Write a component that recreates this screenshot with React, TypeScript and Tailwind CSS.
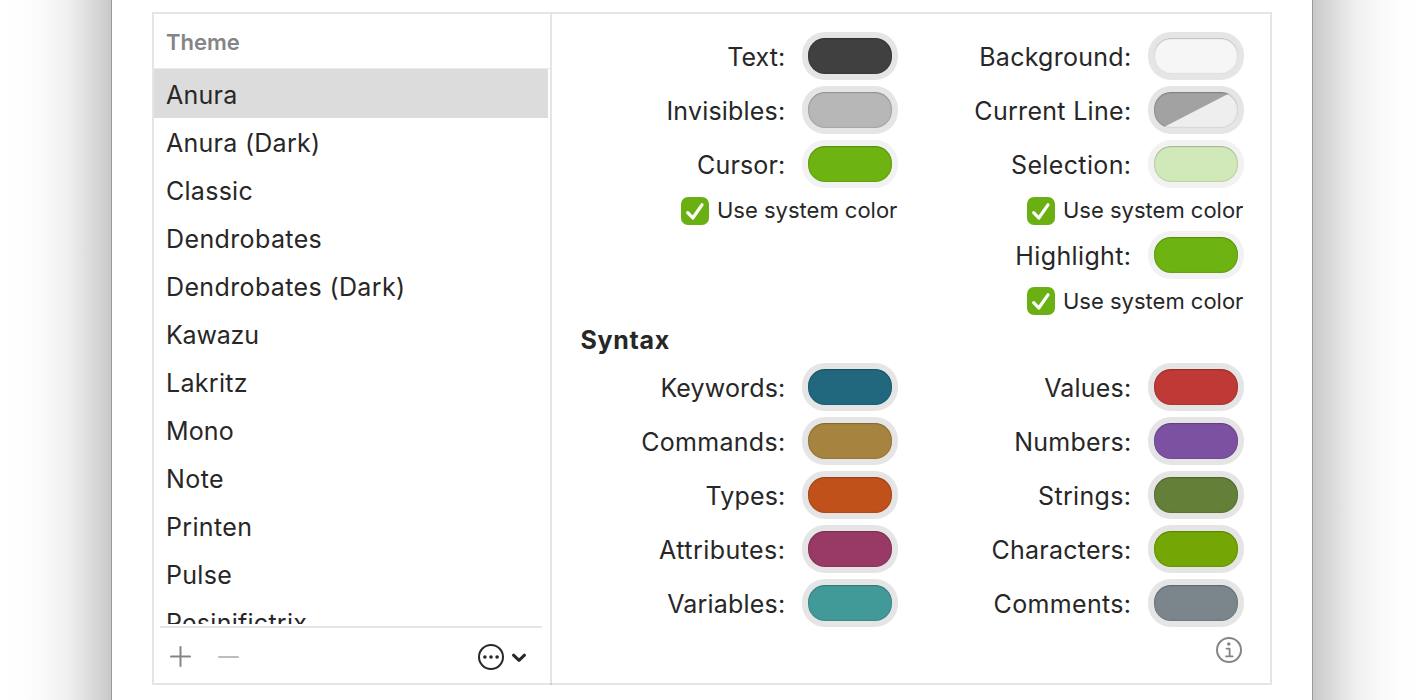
const themes = [
  { name: "Anura", tracking: "tracking-[0.25px]" },
  { name: "Anura (Dark)", tracking: "tracking-[0.27px]" },
  { name: "Classic", tracking: "tracking-[0.27px]" },
  { name: "Dendrobates", tracking: "tracking-[0.38px]" },
  { name: "Dendrobates (Dark)", tracking: "tracking-[0.37px]" },
  { name: "Kawazu", tracking: "tracking-[-0.2px]" },
  { name: "Lakritz", tracking: "tracking-[0.3px]" },
  { name: "Mono", tracking: "tracking-[0.1px]" },
  { name: "Note", tracking: "tracking-[0.4px]" },
  { name: "Printen", tracking: "tracking-[0.35px]" },
  { name: "Pulse", tracking: "tracking-[0.3px]" },
  { name: "Resinifictrix", tracking: "tracking-[0.27px]" },
];

type SwatchProps = {
  label: string;
  color: string;
  tracking: string;
  ring?: string;
  split?: boolean;
};

function Swatch({ label, color, tracking, ring = "bg-[#e5e5e5]", split = false }: SwatchProps) {
  return (
    <div className="flex h-12 items-center justify-end gap-[16.6px]">
      <span className={`whitespace-nowrap pt-0.5 ${tracking}`}>{label}:</span>
      <span className={`flex h-12 w-24 shrink-0 rounded-[23px] p-1.5 ${ring}`}>
        <span className={`relative h-9 w-[84px] overflow-hidden rounded-[17px] ${color}`}>
          {split && (
            <svg className="block h-9 w-[84px]" viewBox="0 0 84 36">
              <path d="M0 0H78L74 2L10 35L0 39Z" fill="#a2a2a2" />
            </svg>
          )}
          <span className="absolute inset-0 rounded-[17px] shadow-[inset_0_0_2px_rgba(0,0,0,0.32),inset_0_1px_1px_rgba(0,0,0,0.14)]" />
        </span>
      </span>
    </div>
  );
}

function SystemColor({ raised = false }: { raised?: boolean }) {
  return (
    <label className="flex h-7 items-center justify-end gap-2 pr-[0.6px] text-[22px]">
      <svg className="h-7 w-7" viewBox="0 0 28 28">
        <rect width="28" height="28" rx="7" fill="#6bb012" />
        <path d="M6.7 15.6L11.8 21L21 7.8" fill="none" stroke="#fff" strokeWidth="3.2" strokeLinecap="round" strokeLinejoin="round" />
      </svg>
      <span className={`whitespace-nowrap ${raised ? "pb-0.5" : ""}`}>Use system color</span>
    </label>
  );
}

export default function App() {
  return (
    <div className="flex h-[700px] w-[1424px] overflow-hidden bg-white font-[Inter,sans-serif] text-[25px] leading-none text-[#272727]">
      <div className="w-[111px] bg-[linear-gradient(to_right,#fff_0%,#fefefe_18%,#f9f9f9_42%,#efefef_62%,#dddddd_80%,#c9c9c9_100%)]" />
      <main className="w-[1202px] border-x border-[#999] px-10 pt-3">
        <div className="flex h-[673px] w-[1120px] border-2 border-[#e5e5e5]">
          <aside className="-mb-0.5 flex w-[398px] flex-col border-r-2 border-black/10">
            <div className="flex h-[55px] shrink-0 items-center border-b border-[#ebebeb] pl-3 pt-0.5 text-[22px] font-semibold text-[#858585]">Theme</div>
            <ul className="h-[555px] shrink-0 overflow-hidden">
              {themes.map(({ name, tracking }, i) => (
                <li
                  key={name}
                  className={`flex items-center pl-3 ${tracking} ${i === 0 ? "mr-0.5 h-[49px] bg-[#dcdcdc] pt-[3px]" : "h-12 pt-0.5"}`}
                >
                  {name}
                </li>
              ))}
            </ul>
            <div className="mx-1.5 mt-[2px] flex h-[57px] w-[382px] border-t-2 border-[#e5e5e5] pt-4">
              <svg className="ml-[9px] h-6 w-[72px]" viewBox="0 0 72 24" fill="none" strokeWidth="2" strokeLinecap="round">
                <path d="M2 12.5h19M11.5 3v19" stroke="#858585" />
                <path d="M50 13h19" stroke="#bdbdbd" />
              </svg>
              <svg className="-mt-1 ml-auto mr-[13px] h-8 w-[54px]" viewBox="0 0 54 32" fill="none" stroke="#272727">
                <circle cx="16" cy="17" r="12" strokeWidth="2" />
                <g fill="#272727" stroke="none">
                  <circle cx="9.9" cy="17" r="1.8" />
                  <circle cx="16" cy="17" r="1.8" />
                  <circle cx="22.1" cy="17" r="1.8" />
                </g>
                <path d="M38.5 15.2l5.5 5.2 5.5-5.2" strokeWidth="3" strokeLinecap="round" strokeLinejoin="round" />
              </svg>
            </div>
          </aside>
          <section className="w-[718px] pl-7 pr-[26px] pt-[18px]">
            <div className="grid grid-cols-[318px_346px]">
              <div className="flex flex-col gap-1.5">
                <Swatch label="Text" tracking="tracking-[0.1px]" color="bg-[#404040]" />
                <Swatch label="Invisibles" tracking="tracking-[0.2px]" color="bg-[#b7b7b7]" />
                <Swatch label="Cursor" tracking="tracking-[0.15px]" color="bg-[#6db311]" ring="bg-[#f2f2f2]" />
                <div className="pt-[3px]"><SystemColor raised /></div>
              </div>
              <div className="flex flex-col gap-1.5">
                <Swatch label="Background" tracking="tracking-[0.27px]" color="bg-[#f6f6f6]" />
                <Swatch label="Current Line" tracking="tracking-[0.3px]" color="bg-[#eeeeee]" split />
                <Swatch label="Selection" tracking="tracking-[0.37px]" color="bg-[#d1e8b8]" ring="bg-[#f2f2f2]" />
                <div className="pt-[3px]"><SystemColor raised /></div>
                <Swatch label="Highlight" tracking="tracking-[0.37px]" color="bg-[#6db311]" ring="bg-[#f2f2f2]" />
                <div className="pt-0.5"><SystemColor /></div>
              </div>
            </div>
            <h2 className="flex h-12 items-center pl-[0.5px] pt-0.5 text-[25px] font-bold tracking-[0.7px]">Syntax</h2>
            <div className="grid grid-cols-[318px_346px] gap-y-1.5">
              <Swatch label="Keywords" tracking="tracking-[0.15px]" color="bg-[#21677e]" />
              <Swatch label="Values" tracking="tracking-[0.2px]" color="bg-[#bf3a36]" />
              <Swatch label="Commands" tracking="tracking-[0.3px]" color="bg-[#a6843f]" />
              <Swatch label="Numbers" tracking="tracking-[0.25px]" color="bg-[#7d51a1]" />
              <Swatch label="Types" tracking="tracking-[0.15px]" color="bg-[#c0511b]" />
              <Swatch label="Strings" tracking="tracking-[0.35px]" color="bg-[#637f38]" />
              <Swatch label="Attributes" tracking="tracking-[0.45px]" color="bg-[#993966]" />
              <Swatch label="Characters" tracking="tracking-[0.25px]" color="bg-[#74a605]" />
              <Swatch label="Variables" tracking="tracking-[0.2px]" color="bg-[#419a98]" />
              <Swatch label="Comments" tracking="tracking-[0.35px]" color="bg-[#7a868b]" />
            </div>
            <div className="flex justify-end pr-0.5 pt-[10px]">
              <svg className="h-[26px] w-[26px]" viewBox="0 0 26 26" fill="none" stroke="#858585">
                <circle cx="13" cy="13" r="12" strokeWidth="2" />
                <circle cx="12.8" cy="7" r="1.8" fill="#858585" stroke="none" />
                <path d="M10.5 11.6h3.1v7.5M10 19.4h6.7" strokeWidth="1.8" strokeLinecap="round" strokeLinejoin="round" />
              </svg>
            </div>
          </section>
        </div>
      </main>
      <div className="w-[111px] bg-[linear-gradient(to_left,#fff_0%,#fefefe_18%,#f9f9f9_42%,#efefef_62%,#dddddd_80%,#c9c9c9_100%)]" />
    </div>
  );
}
